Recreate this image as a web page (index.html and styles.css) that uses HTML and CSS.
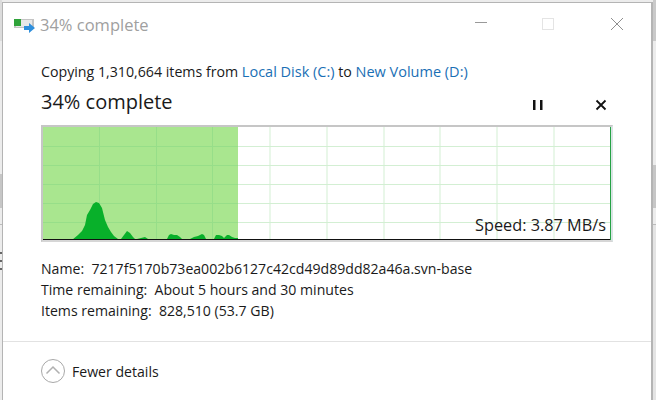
FILE: index.html
```html
<!DOCTYPE html>
<html lang="en">
<head>
    <meta charset="UTF-8">
    <title>34% complete</title>
    <link rel="stylesheet" href="styles.css">
</head>
<body>
<div class="backdrop">
  <div class="window">
    <div class="titlebar">
      <svg class="app-icon" width="22" height="18" viewBox="0 0 22 18">
        <rect x="0" y="3" width="20" height="9" fill="#c4c4c4"/>
        <rect x="2" y="4" width="16" height="7" fill="#e8e8e8"/>
        <rect x="0" y="3" width="7" height="7" fill="#2fa33a"/>
        <path d="M10 10h5V7l6 5-6 5v-3h-5z" fill="#2f8fdc"/>
      </svg>
      <div class="title">34% complete</div>
      <div class="win-btns">
        <svg width="14" height="14" viewBox="0 0 14 14"><path d="M1 5.500h12" stroke="#999" fill="none"/></svg>
        <svg width="14" height="14" viewBox="0 0 14 14"><rect x="1.500" y="1.500" width="11" height="11" stroke="#e4e4e4" fill="none"/></svg>
        <svg class="win-close" width="14" height="14" viewBox="0 0 14 14"><path d="M1 1l12 12M13 1L1 13" stroke="#8f8f8f" fill="none"/></svg>
      </div>
    </div>

    <div class="content">
      <div class="copy-line">Copying 1,310,664 items from <a href="#">Local Disk (C:)</a> to <a href="#">New Volume (D:)</a></div>

      <div class="status-row">
        <div class="status">34% complete</div>
        <div class="actions">
          <svg width="12" height="12" viewBox="0 0 12 12"><path d="M1 1h2.500v10H1zM8 1h2.500v10H8z" fill="#111"/></svg>
          <svg width="12" height="12" viewBox="0 0 12 12"><path d="M1.500 1.500l9 9M10.500 1.500l-9 9" stroke="#111" stroke-width="1.800" fill="none"/></svg>
        </div>
      </div>

      <div class="graph">
        <div class="progress"></div>
        <svg class="grid" width="568" height="113" viewBox="0 0 568 113">
          <path d="M227 0V113M284 0V113M341 0V113M397 0V113M454 0V113M511 0V113" stroke="#d3efd3" fill="none"/>
          <path d="M195 19.500H568M195 38.500H568M195 57.500H568M195 76.500H568M195 95.500H568" stroke="#d3efd3" fill="none"/>
          <path d="M56.500 0V113M113.500 0V113M169.500 0V113M0 19.500H195M0 38.500H195M0 57.500H195M0 76.500H195M0 95.500H195" stroke="#97de89" fill="none"/>
          <path d="M29 113L35 108L39 104L42 98L44 88L47 83L50 77L53 75L56 76L59 81L62 93L65 100L68 105L71 109L75 112L78 112L81 108L84 104L87 106L90 110L92 112L94 112L98 111L102 110L105 112L124 112L126 108L128 107L131 108L134 108L137 110L139 112L147 112L151 110L155 109L159 107L161 108L163 112L171 112L173 108L176 108L179 109L181 111L184 108L186 108L189 110L192 111L195 111V113Z" fill="#08b02a"/>
          <path d="M3 112.500h5M11 112.500h3" stroke="#08b02a" fill="none"/>
          <path d="M0 112.500H568" stroke="#111" fill="none"/>
          <path d="M567.500 0V113" stroke="#25a244" fill="none"/>
        </svg>
        <div class="speed">Speed: 3.87 MB/s</div>
      </div>

      <div class="details">
        <div>Name:&nbsp; 7217f5170b73ea002b6127c42cd49d89dd82a46a.svn-base</div>
        <div>Time remaining:&nbsp; About 5 hours and 30 minutes</div>
        <div>Items remaining:&nbsp; 828,510 (53.7 GB)</div>
      </div>
    </div>

    <div class="footer">
      <svg width="24" height="24" viewBox="0 0 24 24">
        <circle cx="12" cy="12" r="11.500" stroke="#a8a8a8" fill="none"/>
        <path d="M5.500 14.500L12 8l6.500 6.500" stroke="#b0b0b0" stroke-width="1.500" fill="none"/>
      </svg>
      <span>Fewer details</span>
    </div>
  </div>
</div>
</body>
</html>
```

FILE: styles.css
```css
html, body {
    margin: 0;
    height: 100%;
    overflow: hidden;
}

body {
    font-family: "Open Sans", "Noto Sans", sans-serif;
    color: #1a1a1a;
}

/* the desktop showing round the dialog: left strip, right strip, top */
.backdrop {
    height: 400px;
    padding: 2px 3px 0 2px;
    box-sizing: border-box;
    background-color: #ececec;
    background-image:
        linear-gradient(#dcdcdc 41px, #ececec 41px, #ececec 174px, #c6c6c6 174px, #c6c6c6 208px, #ececec 208px, #ececec 224px, #bbb 224px, #bbb 225px, #ececec 225px, #ececec 252px, #666 252px, #666 254px, #ececec 254px, #ececec 260px, #666 260px, #666 262px, #ececec 262px, #ececec 268px, #666 268px, #666 270px, #ececec 270px),
        linear-gradient(#c9c9c9 41px, #ececec 41px, #ececec 165px, #c6c6c6 165px, #c6c6c6 208px, #ececec 208px, #ececec 224px, #bbb 224px, #bbb 225px, #e4e4e4 225px);
    background-size: 2px 100%, 3px 100%;
    background-position: left top, right top;
    background-repeat: no-repeat;
}

.window {
    height: 398px;
    background: #fff;
    border: 1px solid #b4b4b4;
    border-right-width: 2px;
    border-bottom: none;
    box-sizing: border-box;
}

.titlebar {
    display: flex;
    align-items: center;
    height: 44px;
    padding-left: 11px;
}

.app-icon {
    margin-right: 4px;
}

.title {
    font-size: 16.5px;
    color: #a0a0a0;
    margin-bottom: 2px;
}

.win-btns {
    display: flex;
    gap: 53px;
    margin-left: auto;
    margin-right: 27px;
    margin-bottom: 2px;
}

.win-close {
    margin-left: 2px;
}

.content {
    padding: 16px 38px 0 38px;
}

.copy-line {
    font-size: 14.2px;
    line-height: 18px;
}

.copy-line a {
    font-size: 14.5px;
    color: #1a6fb5;
    text-decoration: none;
}

.status-row {
    display: flex;
    align-items: center;
    margin-top: 8px;
    height: 26px;
}

.status {
    font-size: 20px;
    margin-bottom: 2px;
}

.actions {
    display: flex;
    gap: 51px;
    margin-left: auto;
    margin-right: 6px;
    margin-top: 6px;
}

.graph {
    position: relative;
    width: 568px;
    height: 113px;
    margin-top: 10px;
    border: 2px solid #c6c6c6;
    border-right-color: #d9e4e4;
    border-bottom-color: #d6d6d6;
}

.progress {
    width: 195px;
    height: 100%;
    background: #a9e68f;
}

.grid {
    position: absolute;
    left: 0;
    top: 0;
}

.speed {
    position: absolute;
    right: 5px;
    bottom: 4px;
    font-size: 16.3px;
    line-height: 22px;
}

.details {
    margin-top: 16px;
    font-size: 14.1px;
    line-height: 21px;
}

.footer {
    display: flex;
    align-items: center;
    gap: 7px;
    margin-top: 20px;
    padding: 17px 38px;
    border-top: 1px solid #e2e2e2;
    font-size: 14.1px;
}
```
